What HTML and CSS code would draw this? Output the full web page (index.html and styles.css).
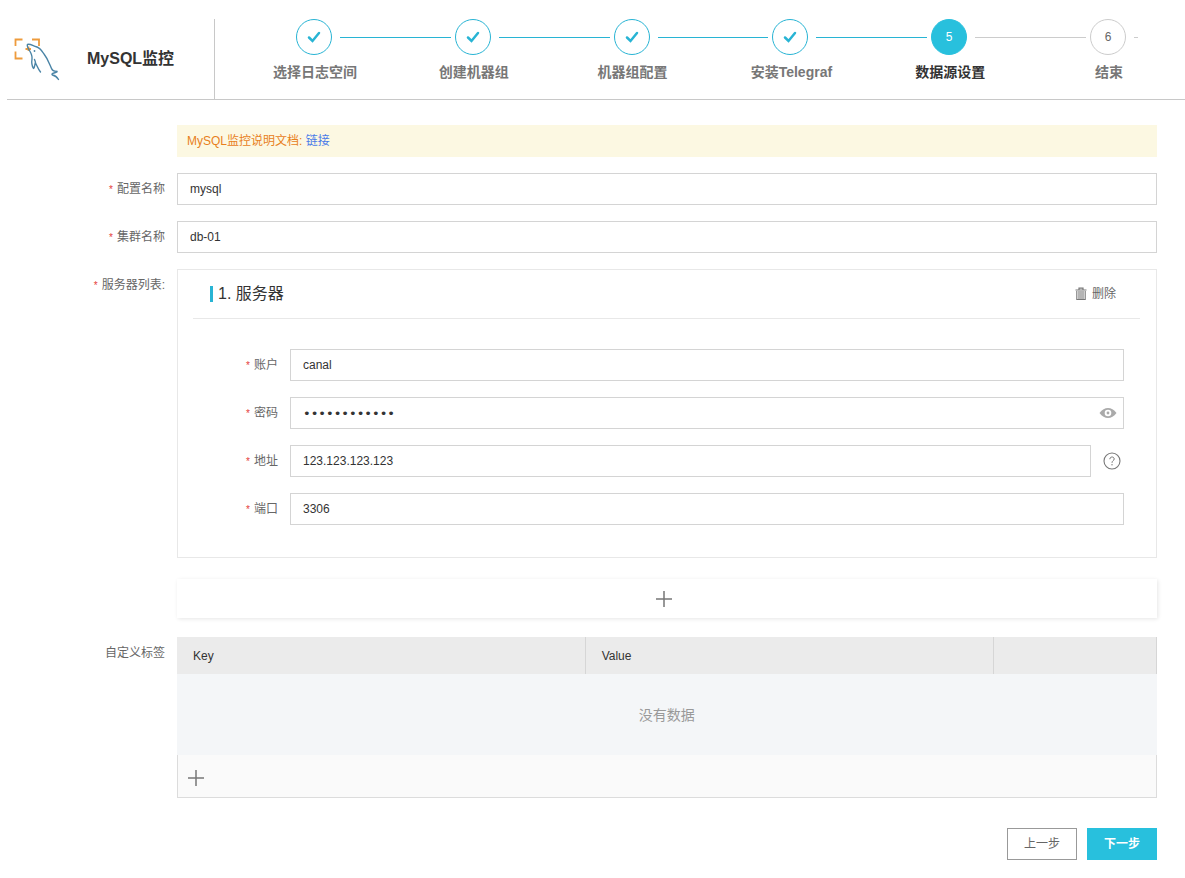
FILE: index.html
```html
<!DOCTYPE html>
<html lang="zh-CN">
<head>
<meta charset="utf-8">
<meta name="viewport" content="width=device-width, initial-scale=1">
<title>MySQL监控</title>
<link rel="stylesheet" href="styles.css">
</head>
<body>
<header class="topbar">
  <div class="brand">
    <svg class="brand-logo" viewBox="0 0 48 44" aria-hidden="true">
      <g fill="none" stroke="#ee9b3c" stroke-width="1.800">
        <path d="M2.500 9V2.500H9.500M19 2.500H26V9M2.500 14.500V21.500H9.500M12.500 12H18M15.500 9.500V14"/>
      </g>
      <g fill="none" stroke="#4a84a6" stroke-width="1.400" stroke-linejoin="round" stroke-linecap="round">
        <path d="M45.500 42.500C44 40 42 38.500 39.500 38C38.500 37.500 39 36.500 41 36C43 35.500 44.500 35 44 34.300C42 34.500 39.500 34 38.500 31.500C36.500 27 35 22 31 17C28.500 13 26.500 10 22.500 9.500C20 9 17 6.500 14.500 7.500C13.500 9 15 11 16.500 13.500C18 16 19.500 18.500 19 22C18.500 25 19 29 20.500 31.500C22 30 21.500 27.500 22.500 26C24 28.500 25 32 27.500 35"/>
        <path d="M22.500 26C22.500 24.500 22 23.500 21.500 22.500"/>
      </g>
      <circle cx="21.500" cy="14" r="0.900" fill="#4a84a6"/>
    </svg>
    <h1 class="brand-title">MySQL监控</h1>
  </div>
  <ol class="steps">
    <li class="step done"><div class="track"><span class="dot"><svg class="check" viewBox="0 0 14 12" aria-hidden="true"><path d="M2 6.500L5.500 10L12 2"/></svg></span></div><span class="step-name">选择日志空间</span></li>
    <li class="step done"><div class="track"><span class="dot"><svg class="check" viewBox="0 0 14 12" aria-hidden="true"><path d="M2 6.500L5.500 10L12 2"/></svg></span></div><span class="step-name">创建机器组</span></li>
    <li class="step done"><div class="track"><span class="dot"><svg class="check" viewBox="0 0 14 12" aria-hidden="true"><path d="M2 6.500L5.500 10L12 2"/></svg></span></div><span class="step-name">机器组配置</span></li>
    <li class="step done"><div class="track"><span class="dot"><svg class="check" viewBox="0 0 14 12" aria-hidden="true"><path d="M2 6.500L5.500 10L12 2"/></svg></span></div><span class="step-name">安装Telegraf</span></li>
    <li class="step current" aria-current="step"><div class="track"><span class="dot">5</span></div><span class="step-name">数据源设置</span></li>
    <li class="step"><div class="track"><span class="dot">6</span></div><span class="step-name">结束</span></li>
  </ol>
</header>

<form class="form">
  <div class="row">
    <p class="notice">MySQL监控说明文档: <a href="#">链接</a></p>
  </div>
  <div class="row">
    <label class="label required" for="config-name">配置名称</label>
    <input class="input" id="config-name" type="text" value="mysql">
  </div>
  <div class="row">
    <label class="label required" for="cluster-name">集群名称</label>
    <input class="input" id="cluster-name" type="text" value="db-01">
  </div>
  <div class="row">
    <span class="label required" id="servers-label">服务器列表:</span>
    <div class="servers" role="group" aria-labelledby="servers-label">
      <section class="panel">
        <div class="panel-head">
          <h2 class="panel-title">1. 服务器</h2>
          <button class="delete" type="button">
            <svg class="trash" viewBox="0 0 12 14" aria-hidden="true">
              <path d="M0.500 3H11.500M4 2.500V1.200H8V2.500" fill="none" stroke="#777" stroke-width="1.200"/>
              <path d="M1.800 4V12.500H10.200V4M4 4V12M6 4V12M8 4V12" fill="none" stroke="#777" stroke-width="1.100"/>
            </svg>删除</button>
        </div>
        <div class="panel-body">
          <div class="inner-row">
            <label class="label required" for="account">账户</label>
            <input class="input" id="account" type="text" value="canal">
          </div>
          <div class="inner-row">
            <label class="label required" for="password">密码</label>
            <div class="password-box">
              <input class="input password" id="password" type="password" value="abcdefghijkl" autocomplete="off">
              <button class="reveal" type="button" aria-label="显示密码">
                <svg class="eye" viewBox="0 0 18 12" aria-hidden="true">
                  <path d="M0.500 6C3 2.500 6 1 9 1S15 2.500 17.500 6C15 9.500 12 11 9 11S3 9.500 0.500 6Z" fill="#aaa"/>
                  <circle cx="9" cy="6" r="3.300" fill="#fff"/>
                  <circle cx="9" cy="6" r="1.400" fill="#aaa"/>
                </svg>
              </button>
            </div>
          </div>
          <div class="inner-row with-help">
            <label class="label required" for="address">地址</label>
            <input class="input" id="address" type="text" value="123.123.123.123">
            <button class="help" type="button" aria-label="帮助">
              <svg class="help-icon" viewBox="0 0 18 18" aria-hidden="true">
                <circle cx="9" cy="9" r="8" fill="none" stroke="#777" stroke-width="1.100"/>
                <path d="M6.800 7.200C6.800 4.300 11.200 4.300 11.200 7C11.200 8.600 9 8.700 9 10.800" fill="none" stroke="#777" stroke-width="1"/>
                <circle cx="9" cy="12.700" r="0.700" fill="#777"/>
              </svg>
            </button>
          </div>
          <div class="inner-row">
            <label class="label required" for="port">端口</label>
            <input class="input" id="port" type="text" value="3306">
          </div>
        </div>
      </section>
      <button class="add-server" type="button" aria-label="添加服务器">
        <svg class="plus" viewBox="0 0 16 16" aria-hidden="true"><path d="M8 0V16M0 8H16"/></svg>
      </button>
    </div>
  </div>
  <div class="row">
    <span class="label" id="tags-label">自定义标签</span>
    <div class="tags">
      <table class="tag-table" aria-labelledby="tags-label">
        <colgroup><col class="col-key"><col class="col-value"><col></colgroup>
        <thead><tr><th>Key</th><th>Value</th><td></td></tr></thead>
        <tbody><tr><td class="empty" colspan="3">没有数据</td></tr></tbody>
      </table>
      <div class="tag-foot">
        <button class="add-tag" type="button" aria-label="添加标签">
          <svg class="plus" viewBox="0 0 16 16" aria-hidden="true"><path d="M8 0V16M0 8H16"/></svg>
        </button>
      </div>
    </div>
  </div>
  <div class="actions">
    <button class="btn" type="button">上一步</button>
    <button class="btn primary" type="submit">下一步</button>
  </div>
</form>
</body>
</html>
```

FILE: styles.css
```css
* { box-sizing: border-box; }

body {
  margin: 0;
  background: #fff;
  color: #333;
  font: 12px/18px "Liberation Sans", "Noto Sans CJK SC", sans-serif;
}

button, input { font: inherit; color: inherit; }

button {
  padding: 0;
  border: 0;
  background: none;
  cursor: pointer;
}

svg { display: block; }

/* Header */
.topbar {
  display: flex;
  margin-left: 7px;
  padding-top: 19px;
  border-bottom: 1px solid #c8c8c8;
}

.brand {
  display: flex;
  flex: none;
  align-items: center;
  gap: 26px;
  width: 208px;
  height: 80px;
  padding-left: 6px;
  border-right: 1px solid #c8c8c8;
}

.brand-logo { width: 48px; height: 44px; }

.brand-title {
  margin: 0;
  font-size: 16px;
  line-height: 24px;
}

.steps {
  display: flex;
  flex: 1;
  margin: 0 47px 0 81px;
  padding: 0;
  list-style: none;
}

.step { flex: 1; min-width: 0; }
.step:last-child { flex: 0 0 48px; }

.track {
  display: flex;
  align-items: center;
  gap: 8px;
  margin-right: 4px;
}

.step:last-child .track { margin-right: 0; }

.track::after {
  content: "";
  flex: 1;
  border-top: 1px solid #ccc;
}

.dot {
  display: flex;
  flex: none;
  align-items: center;
  justify-content: center;
  width: 36px;
  height: 36px;
  border: 1px solid #ccc;
  border-radius: 50%;
  color: #666;
}

.done .dot { border-color: #28b4d4; }
.done .track::after { border-color: #28b4d4; }
.current .dot { border-color: #28c0dd; background: #28c0dd; color: #fff; }

.check { width: 14px; height: 12px; }
.check path { fill: none; stroke: #28b4d4; stroke-width: 2.5; stroke-linecap: round; }

.step-name {
  display: block;
  width: 102px;
  margin: 7px 0 0 -32px;
  color: #777;
  font-size: 14px;
  font-weight: 700;
  line-height: 20px;
  text-align: center;
  white-space: nowrap;
}

.current .step-name { color: #333; }

/* Form */
.form {
  display: flex;
  flex-direction: column;
  gap: 16px;
  padding: 25px 28px 18px 0;
}

.row {
  display: grid;
  grid-template-columns: 165px minmax(0, 1fr);
  column-gap: 12px;
}

.label {
  color: #666;
  line-height: 32px;
  text-align: right;
}

.required::before {
  content: "*";
  margin-right: 4px;
  color: #e5403a;
  font-size: 10px;
  line-height: 1;
}

.notice {
  grid-column: 2;
  margin: 0;
  padding: 0 10px;
  background: #fcf8e2;
  color: #e8801c;
  line-height: 32px;
}

.notice a { color: #4a7be8; text-decoration: none; }

.input {
  width: 100%;
  height: 32px;
  padding: 0 12px;
  border: 1px solid #d4d4d4;
  border-radius: 0;
  background: #fff;
  color: #333;
}

.servers { display: flex; flex-direction: column; gap: 21px; padding-bottom: 3px; }

.panel {
  padding: 0 16px 32px 15px;
  border: 1px solid #e8e8e8;
}

.panel-head {
  display: flex;
  align-items: center;
  justify-content: space-between;
  height: 49px;
  padding: 0 24px 0 17px;
  border-bottom: 1px solid #e8e8e8;
}

.panel-title {
  margin: 0;
  padding-left: 5px;
  border-left: 3px solid #28b4d4;
  font-size: 16px;
  font-weight: 400;
  line-height: 16px;
}

.delete { display: flex; align-items: center; gap: 5px; color: #666; }
.trash { width: 12px; height: 14px; }

.panel-body {
  display: grid;
  gap: 16px;
  padding: 30px 16px 0 0;
}

.inner-row {
  display: grid;
  grid-template-columns: 85px minmax(0, 1fr);
  column-gap: 12px;
}

.with-help { grid-template-columns: 85px minmax(0, 1fr) 21px; }
.help-icon { width: 18px; height: 18px; }

.password-box { position: relative; }
.password { display: block; padding-right: 36px; font-family: "DejaVu Sans", sans-serif; font-size: 13px; }

.reveal {
  position: absolute;
  top: 10px;
  right: 7px;
}

.eye { width: 18px; height: 12px; }

.add-server {
  display: flex;
  align-items: center;
  justify-content: center;
  height: 39px;
  padding-right: 6px;
  background: #fff;
  box-shadow: 1px 1px 4px rgba(0, 0, 0, 0.1);
}

.plus { width: 16px; height: 16px; }
.plus path { stroke: #777; stroke-width: 1.5; }

/* Tags */
.tag-table {
  width: 100%;
  border-collapse: collapse;
  table-layout: fixed;
}

.col-key, .col-value { width: 41.67%; }

.tag-table thead { background: #ebebeb; }

.tag-table th, .tag-table thead td {
  height: 37px;
  padding: 0 16px;
  border-right: 1px solid #d6d6d6;
  font-weight: 400;
  text-align: left;
}

.tag-table .empty {
  height: 81px;
  padding: 0;
  background: #f4f6f8;
  color: #999;
  font-size: 14px;
  text-align: center;
}

.tag-foot {
  display: flex;
  align-items: center;
  height: 43px;
  padding: 4px 10px 0;
  border: solid #dcdcdc;
  border-width: 0 1px 1px;
  background: #fafafa;
}

/* Actions */
.actions {
  display: flex;
  justify-content: flex-end;
  gap: 10px;
  padding-top: 14px;
}

.btn {
  width: 70px;
  height: 32px;
  border: 1px solid #999;
  background: #fff;
  color: #666;
}

.primary {
  border-color: #28c0dd;
  background: #28c0dd;
  color: #fff;
  font-weight: 700;
}
```
